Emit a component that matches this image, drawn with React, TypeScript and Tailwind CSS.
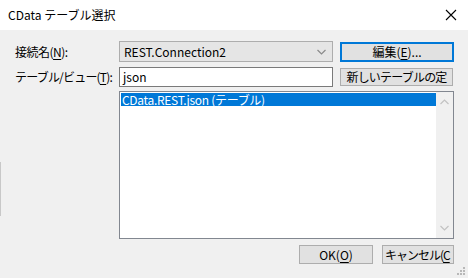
import React from "react";

const font = { fontFamily: '"Noto Sans CJK JP", "Liberation Sans", sans-serif' };

const Mn = ({ c }: { c: string }) => <span className="underline underline-offset-2">{c}</span>;

const Chevron = ({ up, className }: { up?: boolean; className?: string }) => (
  <svg width="9" height="6" viewBox="0 0 9 6" className={className}>
    <path d={up ? "M0.5 5 L4.5 1 L8.5 5" : "M0.5 1 L4.5 5 L8.5 1"} fill="none" stroke="currentColor" strokeWidth="1.2" />
  </svg>
);

const Btn = ({ children, focused, className = "" }: { children: React.ReactNode; focused?: boolean; className?: string }) => (
  <div
    className={`flex items-center justify-center bg-[#e1e1e1] text-[12px] text-black whitespace-nowrap overflow-hidden ${
      focused ? "border-2 border-[#0078d7]" : "border border-[#adadad]"
    } ${className}`}
  >
    {children}
  </div>
);

export default function App() {
  return (
    <div className="w-[468px] h-[278px] bg-[#f0f0f0] flex flex-col relative overflow-hidden" style={font}>
      <div className="h-[30px] bg-white flex items-center justify-between pl-[8px] pr-[11px] shrink-0">
        <span className="text-[12px] text-black">CData テーブル選択</span>
        <svg width="12" height="12" viewBox="0 0 12 12">
          <path d="M1 1 L11 11 M11 1 L1 11" stroke="#000" strokeWidth="1.1" />
        </svg>
      </div>

      <div className="flex flex-col pl-[15px] pt-[11px]">
        <div className="flex items-center h-[21px]">
          <span className="w-[104px] text-[12px] text-black leading-none whitespace-nowrap tracking-[-0.5px]">
            接続名(<Mn c="N" />):
          </span>
          <div className="w-[214px] h-[21px] bg-[#e5e5e5] border border-[#adadad] flex items-center justify-between pl-[4px] pr-[6px]">
            <span className="text-[12px] text-black leading-none">REST.Connection2</span>
            <Chevron className="text-[#8a8a8a]" />
          </div>
          <Btn focused className="ml-[7px] w-[114px] h-[20px]">
            編集(<Mn c="E" />)...
          </Btn>
        </div>

        <div className="flex items-center h-[20px] mt-[5px]">
          <span className="w-[104px] text-[12px] text-black leading-none whitespace-nowrap tracking-[-0.8px]">
            テーブル/ビュー(<Mn c="T" />):
          </span>
          <div className="w-[214px] h-[20px] bg-white border border-[#7a7a7a] flex items-center pl-[3px]">
            <span className="text-[12px] text-black leading-none">json</span>
          </div>
          <Btn className="ml-[7px] w-[113px] h-[18px] tracking-[-0.8px]">新しいテーブルの定</Btn>
        </div>

        <div className="ml-[104px] mt-[4px] w-[335px] h-[148px] bg-white border border-[#828790] flex">
          <div className="flex-1 pl-[1px] pt-[1px]">
            <div className="h-[13px] bg-[#0078d7] text-white text-[12px] leading-[13px] pl-[1px] whitespace-nowrap tracking-[-0.3px]">
              CData.REST.json (テーブル)
            </div>
          </div>
          <div className="w-[17px] bg-[#f0f0f0] flex flex-col items-center justify-between py-[7px] text-[#c2c2c2]">
            <Chevron up />
            <Chevron />
          </div>
        </div>

        <div className="flex justify-end gap-[9px] mt-[6px] pr-[14px]">
          <Btn className="w-[74px] h-[19px]">
            OK(<Mn c="O" />)
          </Btn>
          <Btn className="w-[72px] h-[19px] justify-start pl-[2px] tracking-[-1px]">
            キャンセル(<Mn c="C" />
          </Btn>
        </div>
      </div>

      <div className="absolute left-0 top-[162px] w-px h-[54px] bg-[#c8c8c8]" />
      <svg className="absolute right-[3px] bottom-[3px]" width="8" height="8" viewBox="0 0 8 8">
        {[
          [6, 0],
          [3, 3],
          [6, 3],
          [0, 6],
          [3, 6],
          [6, 6],
        ].map(([x, y]) => (
          <rect key={`${x}-${y}`} x={x} y={y} width="2" height="2" fill="#b8b8b8" />
        ))}
      </svg>
    </div>
  );
}
